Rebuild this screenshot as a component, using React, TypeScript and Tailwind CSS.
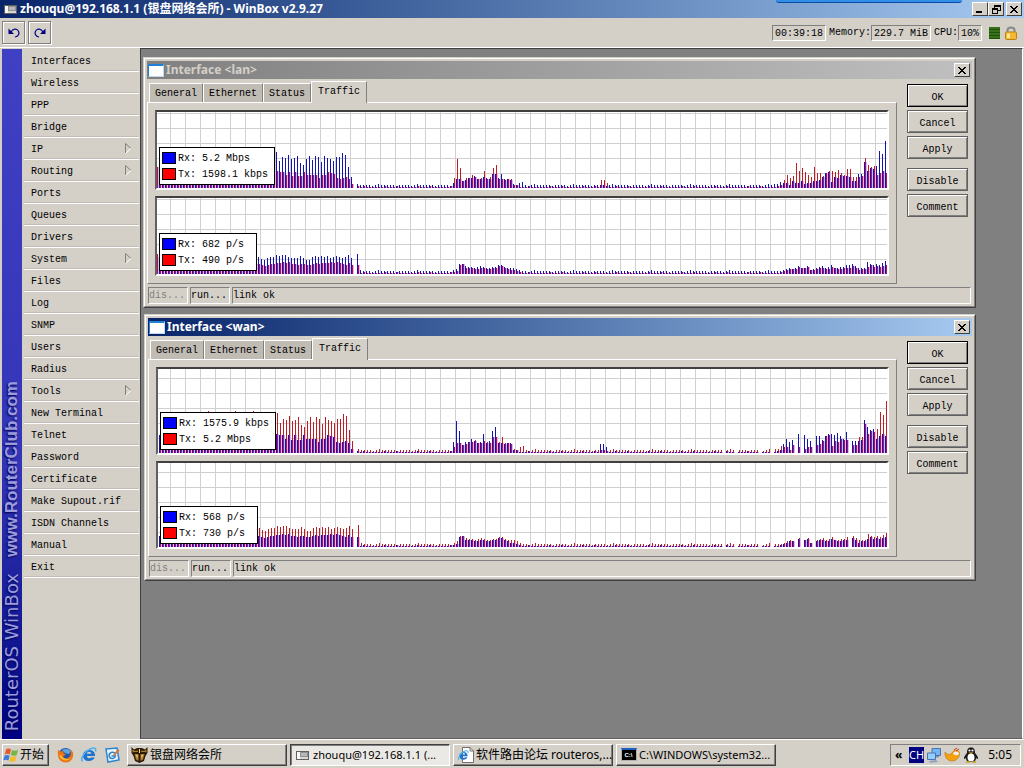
import React from "react";

type Sample = { rx: number; tx: number };

const COLUMNS = 244;

/** Builds a full series from runs that start at a given column; the rest is idle traffic. */
function series(runs: [number, number[]][], idle: number[], lead: number, tips: Record<number, number> = {}): number[] {
  const out: number[] = [];
  for (let i = 0; i < COLUMNS; i++) out.push(i < 40 ? tips[i] ?? lead : idle[i % idle.length]);
  for (const [start, values] of runs) values.forEach((v, i) => (out[start + i] = v));
  return out;
}

const IDLE_HIGH = [3, 3, 2, 3, 3, 3, 3, 2, 3, 4, 3, 3, 3];
const IDLE_LOW = [1, 1, 1, 2, 1, 1, 1, 1, 1, 1, 2];

const bitsHigh = series(
  [
    [40, [36, 27, 31, 30, 33, 29, 30, 32, 25, 23, 29, 32, 28, 32, 31, 26, 32, 30, 29, 27, 31, 31, 35, 33, 21, 11, 0, 4]],
    [99, [5, 9, 9, 7, 8, 10, 10, 12, 9, 9, 11, 10, 9, 14, 14, 10, 14, 9, 9, 8, 4, 3, 5, 6]],
    [206, [4, 4, 6, 5, 5, 3, 7, 5, 5, 7, 4, 5, 5, 7, 7, 8, 11, 15, 16, 6, 11, 10, 13, 12, 12, 11, 7, 7, 14, 14, 26, 17, 20, 19, 22, 37, 34, 47]],
  ],
  IDLE_HIGH,
  32,
  { 17: 38, 26: 38, 32: 38 }
);
const bitsLow = series(
  [
    [0, [21]],
    [40, [17, 16, 16, 13, 16, 12, 16, 12, 12, 16, 13, 13, 13, 13, 10, 13, 13, 16, 15, 14, 10, 9, 10, 11, 9, 4, 0, 2]],
    [99, [10, 29, 20, 7, 10, 10, 13, 11, 9, 10, 17, 9, 11, 20, 23, 9, 9, 8, 9, 9, 3, 3, 1, 1]],
    [148, [8, 8, 5]],
    [206, [1, 2, 3, 8, 13, 10, 12, 25, 17, 20, 16, 13, 11, 21, 15, 15, 12, 15, 17, 17, 16, 18, 15, 13, 19, 19, 11, 11, 11, 12, 30, 23, 21, 22, 13, 15, 17, 15]],
  ],
  IDLE_LOW,
  16
);
const packetsHigh = series(
  [
    [34, [17, 15, 14, 16, 17, 17, 19, 18, 19, 19, 17, 16, 16, 16, 18, 16, 14, 14, 17, 18, 17, 18, 17, 18, 16, 17, 18, 17, 16, 17, 19, 16, 0, 20, 4]],
    [99, [4, 5, 10, 10, 8, 7, 7, 6, 7, 8, 7, 6, 6, 7, 7, 9, 9, 7, 6, 6, 6, 5, 4, 3]],
    [209, [4, 5, 6, 5, 6, 8, 6, 6, 8, 4, 5, 6, 7, 8, 6, 7, 9, 6, 6, 7, 7, 9, 9, 10, 8, 6, 6, 6, 12, 10, 9, 10, 9, 11, 13]],
  ],
  IDLE_HIGH,
  17
);
const packetsLow = series(
  [
    [0, [20]],
    [34, [10, 9, 8, 9, 10, 10, 11, 11, 12, 11, 12, 10, 10, 9, 10, 10, 9, 9, 10, 11, 10, 11, 11, 11, 12, 11, 12, 11, 10, 9, 11, 9, 0, 9, 1]],
    [99, [2, 3, 9, 10, 6, 6, 6, 5, 5, 6, 6, 5, 5, 6, 6, 8, 8, 6, 5, 4, 4, 3, 2, 1]],
    [209, [3, 4, 5, 5, 5, 7, 6, 6, 7, 4, 4, 5, 6, 6, 5, 5, 7, 6, 5, 5, 6, 6, 6, 8, 6, 4, 5, 5, 7, 9, 7, 8, 7, 8, 9]],
  ],
  IDLE_LOW,
  10
);

const WAN_DROPS = new Set([0, 189, 193, 201, 205, 213, 215, 219, 231]);
const zip = (rx: number[], tx: number[]): Sample[] => rx.map((r, i) => ({ rx: r, tx: tx[i] }));
const wan = (values: number[]) => values.map((v, i) => (WAN_DROPS.has(i) ? 0 : Math.round(v * 1.11)));

const LAN_BITS = zip(bitsHigh, bitsLow);
const LAN_PACKETS = zip(packetsHigh, packetsLow);
const WAN_BITS = zip(wan(bitsLow), wan(bitsHigh));
const WAN_PACKETS = zip(wan(packetsLow), wan(packetsHigh));

function Graph({ data, height, rx, tx, label }: { data: Sample[]; height: number; rx: string; tx: string; label: string }) {
  const rows: number[] = [];
  for (let y = height - 15; y >= 0; y -= 15) rows.push(y);
  const cols: number[] = [];
  for (let x = 13; x < 730; x += 15) cols.push(x);
  return (
    <figure className="relative overflow-hidden border-2 border-t-[#404040] border-r-white border-b-white border-l-[#606060] bg-white">
      <div className="flex justify-end">
        <svg width={730} height={height} shapeRendering="crispEdges" className="block shrink-0" role="img" aria-label={label}>
          {cols.map((x) => (
            <rect key={x} x={x} y={0} width={1} height={height} fill="#d0d0d0" />
          ))}
          {rows.map((y) => (
            <rect key={y} x={0} y={y} width={730} height={1} fill="#d0d0d0" />
          ))}
          {data.map((d, i) => {
            const x = 3 * i - 1;
            const shared = Math.min(d.rx, d.tx);
            return (
              <g key={i}>
                <rect x={x} y={height - d.rx} width={1} height={d.rx} fill="#1414b0" />
                <rect x={x + 1} y={height - d.tx} width={1} height={d.tx - shared} fill="#c01c24" />
                <rect x={x + 1} y={height - shared} width={1} height={shared} fill="#b0105c" />
                <rect x={x + 2} y={height - shared} width={1} height={shared} fill="#e0b8ec" />
              </g>
            );
          })}
        </svg>
      </div>
      <figcaption className="absolute bottom-[3px] left-[2px] border border-black bg-white py-[2px] pr-[6px] pl-[2px]">
        {[
          { color: "bg-[#0000ff]", text: `Rx: ${rx}` },
          { color: "bg-[#ff0000]", text: `Tx: ${tx}` },
        ].map((item) => (
          <div key={item.text} className="flex h-4 items-center gap-[2px] whitespace-pre">
            <span className={`h-3 w-[14px] border border-black ${item.color}`} />
            <span className="min-w-[72px] pt-px">{item.text}</span>
          </div>
        ))}
      </figcaption>
    </figure>
  );
}

const RAISED = "border border-t-white border-l-white border-r-[#404040] border-b-[#404040] bg-[#d4d0c8]";

function CloseGlyph() {
  return (
    <svg width="8" height="7" viewBox="0 0 8 7" shapeRendering="crispEdges" aria-hidden="true">
      <path d="M0 0h2v1h1v1h2V1h1V0h2v1H7v1H6v1H5v1h1v1h1v1h1v1H6V6H5V5H3v1H2v1H0V6h1V5h1V4h1V3H2V2H1V1H0z" fill="#000" />
    </svg>
  );
}

function FrameButton({ label, children }: { label: string; children: React.ReactNode }) {
  return (
    <button aria-label={label} className={`flex h-[14px] w-4 items-center justify-center ${RAISED}`}>
      {children}
    </button>
  );
}

function ActionButton({ text, primary }: { text: string; primary?: boolean }) {
  return (
    <button
      className={`flex h-[23px] w-full items-center justify-center border pt-[4px] shadow-[inset_1px_1px_0_#ffffff,inset_-1px_-1px_0_#808080] ${
        primary ? "border-black" : "border-[#606060]"
      }`}
    >
      {text}
    </button>
  );
}

function InterfaceWindow({
  title,
  active,
  graphHeight,
  graphs,
}: {
  title: string;
  active?: boolean;
  graphHeight: number;
  graphs: { data: Sample[]; rx: string; tx: string; label: string }[];
}) {
  return (
    <section
      aria-label={title}
      className={`border border-t-[#d4d0c8] border-r-[#404040] border-b-[#404040] border-l-[#d4d0c8] bg-[#d4d0c8] ${active ? "ml-px" : ""}`}
    >
      <div className="border border-t-white border-r-[#808080] border-b-[#808080] border-l-white p-[2px]">
        <header
          className={`flex h-[18px] items-center gap-[2px] bg-linear-to-r pr-[2px] pl-[1px] font-['Noto_Sans','Noto_Sans_CJK_SC',sans-serif] text-[12px] font-bold ${
            active ? "from-[#0a246a] to-[#a6caf0] text-white" : "from-[#808080] to-[#c0c0c0] text-[#d4d0c8]"
          }`}
        >
          <span className="h-[13px] w-[16px] border border-t-2 border-[#2080d8] border-r-[#c0d8f0] border-b-[#c0d8f0] bg-white" />
          <h2 className="flex-1">{title}</h2>
          <FrameButton label={`Close ${title}`}>
            <CloseGlyph />
          </FrameButton>
        </header>
        <div className="flex">
          <div className="min-w-0 flex-1">
            <div role="tablist" className="flex h-[23px] items-end pl-[2px]">
              {["General", "Ethernet", "Status"].map((tab) => (
                <button
                  key={tab}
                  role="tab"
                  aria-selected="false"
                  className="h-[19px] border-t border-r border-l border-t-white border-r-[#808080] border-l-white bg-[#c0bcb4] px-[5px] pt-[2px]"
                >
                  {tab}
                </button>
              ))}
              <button
                role="tab"
                aria-selected="true"
                className="relative -mb-px h-[22px] border-t border-r border-l border-t-white border-r-[#808080] border-l-white bg-[#d4d0c8] px-[6px] pb-px"
              >
                Traffic
              </button>
            </div>
            <div className="flex flex-col gap-[6px] border border-t-white border-r-[#808080] border-b-[#808080] border-l-white p-[7px]">
              {graphs.map((g) => (
                <Graph key={g.label} height={graphHeight} {...g} />
              ))}
            </div>
          </div>
          <div className="mr-1 ml-[10px] flex w-[61px] flex-col gap-[3px] pt-[5px]">
            <ActionButton text="OK" primary />
            <ActionButton text="Cancel" />
            <ActionButton text="Apply" />
            <div className="h-[3px]" />
            <ActionButton text="Disable" />
            <ActionButton text="Comment" />
          </div>
        </div>
        <footer className="mt-[3px] flex h-[17px] gap-[2px] pr-[1px] pl-[1px] leading-[16px]">
          <span className="w-[40px] border border-t-[#808080] border-r-white border-b-white border-l-[#808080] text-[#808080]">dis...</span>
          <span className="w-[40px] border border-t-[#808080] border-r-white border-b-white border-l-[#808080]">run...</span>
          <span className="flex-1 border border-t-[#808080] border-r-white border-b-white border-l-[#808080]">link ok</span>
        </footer>
      </div>
    </section>
  );
}

const MENU = [
  "Interfaces", "Wireless", "PPP", "Bridge", "IP", "Routing", "Ports", "Queues", "Drivers", "System", "Files", "Log",
  "SNMP", "Users", "Radius", "Tools", "New Terminal", "Telnet", "Password", "Certificate", "Make Supout.rif",
  "ISDN Channels", "Manual", "Exit",
];
const WITH_SUBMENU = new Set(["IP", "Routing", "System", "Tools"]);

function UndoGlyph({ flip }: { flip?: boolean }) {
  return (
    <svg width="12" height="10" viewBox="0 0 12 10" className={flip ? "-scale-x-100" : ""} aria-hidden="true">
      <path d="M0.5 0.5V6H6z" fill="#000080" />
      <path d="M3 4C5 .5 8.500 .5 10 2.500C12 5 10.500 8.500 7 9" fill="none" stroke="#000080" strokeWidth="1.200" />
    </svg>
  );
}

function AppGlyph() {
  return (
    <svg width="13" height="9" viewBox="0 0 13 9" shapeRendering="crispEdges" aria-hidden="true">
      <rect width="13" height="9" fill="#606060" />
      <rect x="1" y="1" width="11" height="7" fill="#d8d8d8" />
      <rect x="1" y="1" width="3" height="7" fill="#f8f8f8" />
      <rect x="4" y="1" width="8" height="5" fill="#909090" />
      <rect x="5" y="2" width="6" height="3" fill="#b8b8b8" />
    </svg>
  );
}

function WindowsLogo() {
  return (
    <svg width="16" height="16" viewBox="0 0 16 16" aria-hidden="true">
      <path d="M3 2.500C5 1 6.500 1.500 8 2.500L6.800 7.500C5.200 6.500 3.500 6.500 1.800 7.500z" fill="#e8582c" />
      <path d="M9 3C11 4 13 4 15 2.800L13.800 7.800C12 9 10 8.800 7.900 7.900z" fill="#72b840" />
      <path d="M1.500 8.700C3.500 7.500 5 7.800 6.600 8.700L5.400 13.500C3.500 12.300 2 12.500 .2 13.600z" fill="#3c7cdc" />
      <path d="M7.600 9.200C9.600 10 11.500 10.200 13.500 9.100L12.300 14C10 15.200 8.200 15 6.400 14z" fill="#f4bc28" />
    </svg>
  );
}

function FirefoxIcon() {
  return (
    <svg width="17" height="16" viewBox="0 0 17 16" aria-hidden="true">
      <circle cx="8.500" cy="8" r="7" fill="#2456a8" />
      <path d="M5 3C8 1 12 2 14 4L12 7L8 6z" fill="#60a8e0" />
      <path d="M1 3C.2 10 2 15 8.500 15.500C14 15.500 17 11 16 5.500C15 4 14.500 3 13.500 2.500C15 8 12 12 8.500 11.500C6 11 5.500 9.500 7 8.500L9 7.500L6.500 6L6 4L4 4.500z" fill="#ee7414" />
      <path d="M2 8C4 14 10 15 14 11C11 13 6 12 4.500 8.500z" fill="#ffbc30" />
    </svg>
  );
}

function ExplorerIcon({ size }: { size: number }) {
  return (
    <svg width={size} height={size} viewBox="0 0 16 16" aria-hidden="true">
      <path d="M14 9H5.800C6 11.500 9 12 10.200 10.600H13.700C12 15.500 2 15.500 2 8.400C2 1.500 14.500 .8 14 9zM5.800 6.700H10.400C10.300 4 5.900 4 5.800 6.700z" fill="#1c74d0" fillRule="evenodd" />
      <path d="M1.500 14.500C-1 11 4 4 10 1.500C13 .5 15.500 1 14.500 4.500" fill="none" stroke="#50b0f0" strokeWidth="1.600" />
    </svg>
  );
}

function DesktopIcon() {
  return (
    <svg width="16" height="16" viewBox="0 0 16 16" aria-hidden="true">
      <path d="M2 2L13 1L15 13L4 15z" fill="#e8f4ff" stroke="#2c84cc" strokeWidth="1.500" />
      <path d="M11 6C7 4 4 7 5.500 10C7 12.500 11 12 11.500 9H7.500" fill="none" stroke="#2c84cc" strokeWidth="1.500" />
      <path d="M9 8L14 2L15.500 3.500L10.500 9z" fill="#d87838" />
    </svg>
  );
}

function BeastIcon() {
  return (
    <svg width="17" height="16" viewBox="0 0 17 16" aria-hidden="true">
      <path d="M.5 0L3 2.500L6 1H11L14 2.500L16.500 0V6L14.500 9L13 14L8.500 16L4 14L2.500 9L.5 6z" fill="#2c1c08" />
      <path d="M1.500 2.500L4 4L6.500 3.500L7 5H3L1.500 5.500zM15.500 2.500L13 4L10.500 3.500L10 5H14L15.500 5.500zM3.500 7H7.500V14L5 12.500zM13.500 7H9.500V14L12 12.500z" fill="#b07c2c" />
      <path d="M5 8H6.500V12zM12 8H10.500V12zM8 2H9V6H8z" fill="#f4d890" />
    </svg>
  );
}

function PageIcon() {
  return (
    <span className="relative block h-4 w-4">
      <svg width="16" height="16" viewBox="0 0 16 16" aria-hidden="true">
        <path d="M4.500 .5H12L15.500 4V15.500H4.500z" fill="#fff" stroke="#707070" />
        <path d="M12 .5V4H15.500" fill="none" stroke="#707070" />
      </svg>
      <span className="absolute top-[3px] left-0">
        <ExplorerIcon size={11} />
      </span>
    </span>
  );
}

function ConsoleIcon() {
  return (
    <span className="flex h-[13px] w-4 items-center justify-center border border-t-2 border-[#b0b0b0] border-t-[#2060c0] bg-black font-['Liberation_Sans',sans-serif] text-[6px] leading-none font-bold text-white">
      C:\
    </span>
  );
}

function TaskButton({ icon, text, pressed, latin }: { icon: React.ReactNode; text: string; pressed?: boolean; latin?: boolean }) {
  return (
    <button
      aria-pressed={pressed ? "true" : "false"}
      className={`flex h-[22px] w-[160px] min-w-0 items-center gap-[2px] border pl-[3px] ${latin ? "text-[11px]" : ""} ${
        pressed
          ? "border-t-[#404040] border-r-white border-b-white border-l-[#404040] bg-[#ebe9e5] pt-px shadow-[inset_1px_1px_0_#808080]"
          : "border-t-white border-r-[#404040] border-b-[#404040] border-l-white bg-[#d4d0c8] shadow-[inset_-1px_-1px_0_#808080]"
      }`}
    >
      <span className="flex w-[17px] shrink-0 justify-center">{icon}</span>
      <span className="whitespace-nowrap">{text}</span>
    </button>
  );
}

const SUNKEN = "border border-t-[#808080] border-l-[#808080] border-r-white border-b-white px-[2px] pt-px";

export default function App() {
  return (
    <div className="flex h-screen flex-col overflow-hidden bg-[#d4d0c8] font-['Liberation_Mono','Noto_Sans_CJK_SC',monospace] text-[10px] leading-[14px] text-black">
      <header className="relative flex h-[18px] shrink-0 items-center gap-[3px] bg-linear-to-r from-[#0a246a] to-[#a6caf0] pr-[2px] pl-1 font-['Noto_Sans','Noto_Sans_CJK_SC',sans-serif] text-[12px] font-bold text-white">
        <AppGlyph />
        <h1 className="flex-1 whitespace-nowrap">zhouqu@192.168.1.1 (银盘网络会所) - WinBox v2.9.27</h1>
        <div className="flex">
          <FrameButton label="Minimize">
            <span className="mt-[6px] mr-[2px] h-[2px] w-[6px] bg-black" />
          </FrameButton>
          <FrameButton label="Restore">
            <svg width="9" height="9" viewBox="0 0 9 9" shapeRendering="crispEdges" aria-hidden="true">
              <path d="M2 0H9V6H6V9H0V3H2zM3 2V3H6V5H8V2zM1 5V8H5V5z" fill="#000" fillRule="evenodd" />
            </svg>
          </FrameButton>
          <span className="ml-[2px] flex">
            <FrameButton label="Close">
              <CloseGlyph />
            </FrameButton>
          </span>
        </div>
        <div className="absolute top-0 right-[62px] h-[3px] w-[186px] rounded-b-sm border-b border-[#1048a8] bg-[#3090e8]" />
      </header>

      <div className="flex h-[29px] shrink-0 items-center gap-[3px] px-[2px]">
        <button aria-label="Undo" className="flex size-[23px] items-center justify-center border border-[#808080] shadow-[inset_1px_1px_0_#ffffff,1px_1px_0_#ffffff]">
          <UndoGlyph />
        </button>
        <button aria-label="Redo" className="flex size-[23px] items-center justify-center border border-[#808080] shadow-[inset_1px_1px_0_#ffffff,1px_1px_0_#ffffff]">
          <UndoGlyph flip />
        </button>
        <div className="ml-auto flex items-center gap-[3px] pr-[5px]">
          <span className={`h-4 ${SUNKEN}`}>00:39:18</span>
          <span className="flex items-center">
            Memory:<span className={`h-4 whitespace-pre ${SUNKEN}`}>229.7 MiB</span>
          </span>
          <span className="flex items-center">
            CPU:<span className={`h-4 ${SUNKEN}`}>10%</span>
          </span>
          <span className="ml-1 h-3 w-[11px] bg-[repeating-linear-gradient(#38701c_0_2px,#1c5408_2px_3px)]" />
          <svg width="12" height="14" viewBox="0 0 12 14" className="ml-[2px]" aria-label="Secure connection">
            <path d="M2.500 7V4C2.500 .5 9.500 .5 9.500 4V7" fill="none" stroke="#888" strokeWidth="2" />
            <rect x=".5" y="6" width="11" height="7.500" rx="1" fill="#f4b830" stroke="#b88414" />
            <path d="M2 7.500H5V12H2z" fill="#ffe890" />
          </svg>
        </div>
      </div>

      <div className="flex min-h-0 flex-1 border-t border-white pr-[1px] pl-[2px]">
        <div className="mt-px flex w-5 shrink-0 items-center bg-linear-to-b from-[#4040c4] via-[#3434b8] via-60% to-[#000080]">
          <div className="mt-auto mb-2 w-5 rotate-180 text-[18px] leading-5 whitespace-pre text-[#9c9cdc] [text-shadow:-1px_-1px_2px_#00004c] [writing-mode:vertical-rl]">
            <span className="font-['DejaVu_Sans',sans-serif]">RouterOS WinBox</span>
            <span className="inline-block h-4" />
            <span className="font-['Liberation_Sans',sans-serif] text-[17px] font-bold">www.RouterClub.com</span>
          </div>
        </div>
        <nav className="ml-[2px] w-[115px] shrink-0 pt-[2px]">
          <ul>
            {MENU.map((item) => (
              <li key={item} className="border-b border-white pr-px">
                <button className="flex h-[21px] w-full items-center border-b border-[#c0bcb4] pt-[4px] pl-[7px] text-left whitespace-pre">
                  <span className="flex-1">{item}</span>
                  {WITH_SUBMENU.has(item) && (
                    <svg width="7" height="11" viewBox="0 0 7 11" className="mr-[6px] mb-[4px]" aria-hidden="true">
                      <path d="M.5 10V.5L6 5.500" fill="none" stroke="#808080" />
                      <path d="M.5 10.500L6 5.500" fill="none" stroke="#fff" />
                    </svg>
                  )}
                </button>
              </li>
            ))}
          </ul>
        </nav>
        <main className="ml-px flex min-w-0 flex-1 flex-col gap-[6px] overflow-hidden border border-t-[#404040] border-r-white border-b-[#606060] border-l-[#404040] bg-[#808080] pt-2 pr-[46px] pl-[2px]">
          <InterfaceWindow
            title="Interface <lan>"
            graphHeight={76}
            graphs={[
              { data: LAN_BITS, rx: "5.2 Mbps", tx: "1598.1 kbps", label: "lan bits per second" },
              { data: LAN_PACKETS, rx: "682 p/s", tx: "490 p/s", label: "lan packets per second" },
            ]}
          />
          <InterfaceWindow
            title="Interface <wan>"
            active
            graphHeight={84}
            graphs={[
              { data: WAN_BITS, rx: "1575.9 kbps", tx: "5.2 Mbps", label: "wan bits per second" },
              { data: WAN_PACKETS, rx: "568 p/s", tx: "730 p/s", label: "wan packets per second" },
            ]}
          />
        </main>
      </div>

      <footer className="flex h-[29px] shrink-0 items-center border-t border-white px-[2px] pt-px font-['Noto_Sans','Noto_Sans_CJK_SC',sans-serif] text-[12px]">
        <button className={`flex h-[22px] w-[47px] items-center gap-px shadow-[inset_-1px_-1px_0_#808080] ${RAISED}`}>
          <WindowsLogo />
          <span className="whitespace-nowrap">开始</span>
        </button>
        <div className="ml-2 flex items-center gap-[7px]">
          <a href="#firefox" aria-label="Firefox"><FirefoxIcon /></a>
          <a href="#explorer" aria-label="Internet Explorer"><ExplorerIcon size={16} /></a>
          <a href="#desktop" aria-label="Show desktop"><DesktopIcon /></a>
        </div>
        <div className="ml-[7px] flex gap-[3px]">
          <TaskButton icon={<BeastIcon />} text="银盘网络会所" />
          <TaskButton icon={<AppGlyph />} text="zhouqu@192.168.1.1 (..." pressed latin />
          <TaskButton icon={<PageIcon />} text="软件路由论坛 routeros,..." />
          <TaskButton icon={<ConsoleIcon />} text="C:\WINDOWS\system32..." latin />
        </div>
        <div className="mr-px ml-auto flex h-[22px] w-[131px] items-center gap-[2px] border border-t-[#808080] border-r-white border-b-white border-l-[#808080] pr-2 pl-1">
          <span className="w-3 font-bold">«</span>
          <span className="flex h-4 w-[15px] items-center justify-center bg-[#000080] text-[11px] text-white">CH</span>
          <svg width="16" height="16" viewBox="0 0 16 16" aria-hidden="true">
            <path d="M6 1.500H14.500V8.500H6z" fill="#70b8f8" stroke="#5070b0" />
            <path d="M9 9H13V10.500H9z" fill="#8090b0" />
            <path d="M1.500 6H9.500V12.500H1.500z" fill="#90d0ff" stroke="#5070b0" />
            <path d="M3 14L10 13L12 15L4 15.800z" fill="#90a0c0" />
          </svg>
          <svg width="17" height="16" viewBox="0 0 17 16" aria-hidden="true">
            <path d="M1 5C3 8 6 8 8 6C9 3 14 2 15.500 5.500C16 11 12 14 8 14C4 14 .5 11 1 5z" fill="#f4a010" stroke="#c07010" strokeWidth=".6" />
            <path d="M9 6C11 3.500 15 4 15 7C13 9 10 8.500 9 6z" fill="#f0f0e8" />
            <path d="M10 3L13 1M12 4L15 2" stroke="#d83020" strokeWidth="1" />
          </svg>
          <svg width="16" height="16" viewBox="0 0 16 16" aria-hidden="true">
            <path d="M8 .5C4.500 .5 4 3 4 6C1.500 9 .5 11 1 12C2 12 2.500 11 3 11C3 14 5 15 8 15C11 15 13 14 13 11C13.500 11 14 12 15 12C15.500 11 14.500 9 12 6C12 3 11.500 .5 8 .5z" fill="#181818" />
            <ellipse cx="8" cy="10.500" rx="3.500" ry="4" fill="#fff" />
            <circle cx="6.500" cy="3.500" r="1.100" fill="#fff" />
            <circle cx="9.500" cy="3.500" r="1.100" fill="#fff" />
            <path d="M5.500 5.500H10.500L8 7z" fill="#f8c020" />
            <path d="M3 15H7M9 15H13" stroke="#c8a020" strokeWidth="1.500" />
          </svg>
          <time className="ml-auto">5:05</time>
        </div>
      </footer>
    </div>
  );
}
